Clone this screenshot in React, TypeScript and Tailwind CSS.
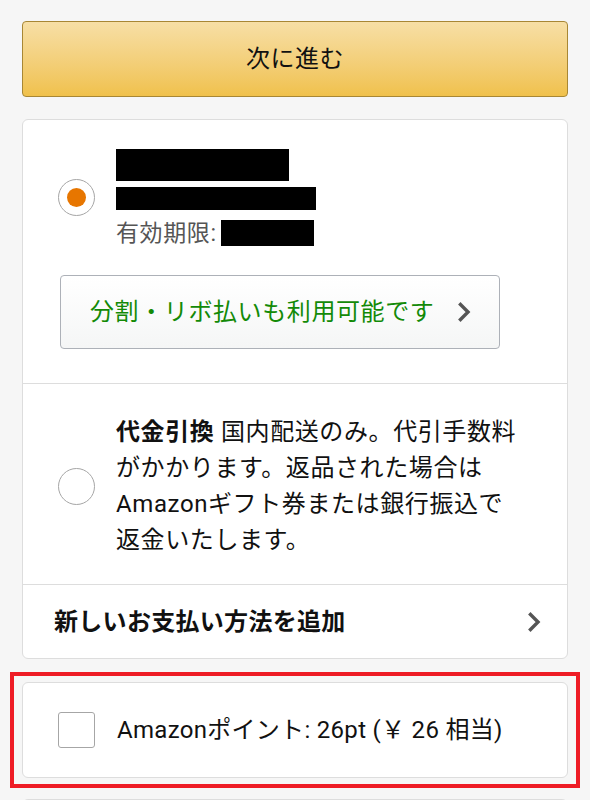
import React from 'react'

const font = { fontFamily: 'Roboto, "Noto Sans CJK JP", sans-serif' }

function Chevron({ className }: { className?: string }) {
  return (
    <svg viewBox="0 0 13 20" className={className} fill="none">
      <path d="M2.5 2.5 L10 10 L2.5 17.5" stroke="#555" strokeWidth="3.4" strokeLinecap="square" />
    </svg>
  )
}

function Radio({ checked }: { checked?: boolean }) {
  return (
    <div className="w-[37px] h-[37px] shrink-0 rounded-full border-[1.5px] border-[#a6a6a6] bg-white flex items-center justify-center">
      {checked && <div className="w-[19px] h-[19px] rounded-full bg-[#e77600]" />}
    </div>
  )
}

export default function App() {
  return (
    <div className="h-[800px] overflow-hidden bg-[#f6f6f6] px-[22px] pt-[21px] text-[#111]" style={font}>
      {/* 次に進む */}
      <button className="w-full h-[76px] rounded-[4px] border border-[#a88734] bg-gradient-to-b from-[#f7dfa5] to-[#f0c14b] text-[24px] tracking-[0.5px] text-[#111]">
        次に進む
      </button>

      {/* Payment methods */}
      <div className="mt-[22px] bg-white border border-[#dddddd] rounded-[6px]">
        <div className="pt-[29px] pb-[34px] border-b border-[#dddddd]">
          <div className="flex items-center pl-[35px] gap-[21px]">
            <Radio checked />
            <div className="flex flex-col">
              <div className="w-[173px] h-[32px] bg-black" />
              <div className="w-[200px] h-[23px] bg-black mt-[6px]" />
              <div className="flex items-center mt-[10px] h-[26px]">
                <span className="text-[23px] tracking-[0.6px] text-[#555] leading-none">有効期限:</span>
                <div className="w-[93px] h-[26px] bg-black ml-[4px]" />
              </div>
            </div>
          </div>
          <div className="ml-[37px] mt-[29px] w-[440px] h-[74px] rounded-[4px] border border-[#adb1b8] bg-gradient-to-b from-[#ffffff] to-[#f5f6f6] flex items-center pl-[29px] pr-[28px] justify-between">
            <span className="text-[24px] tracking-[0.6px] text-[#138a07] whitespace-nowrap">分割・リボ払いも利用可能です</span>
            <Chevron className="w-[13px] h-[20px]" />
          </div>
        </div>

        <div className="flex items-center pl-[35px] gap-[21px] pt-[30px] pb-[26px] border-b border-[#dddddd]">
          <Radio />
          <div className="text-[24px] leading-[36px] tracking-[0.6px] whitespace-nowrap">
            <span className="font-bold">代金引換</span> 国内配送のみ。代引手数料
            <br />
            がかかります。返品された場合は
            <br />
            Amazonギフト券または銀行振込で
            <br />
            返金いたします。
          </div>
        </div>

        <div className="h-[73px] flex items-center justify-between pl-[31px] pr-[26px]">
          <span className="text-[24px] tracking-[0.3px] font-bold">新しいお支払い方法を追加</span>
          <Chevron className="w-[13px] h-[20px]" />
        </div>
      </div>

      {/* Amazon points */}
      <div className="mt-[13px] -mx-[12px] border-[4px] border-[#ee1c25] px-[8px] py-[6px]">
        <div className="h-[96px] bg-white border border-[#dddddd] rounded-[6px] flex items-center pl-[35px] gap-[22px]">
          <div className="w-[37px] h-[36px] shrink-0 rounded-[3px] border-[1.5px] border-[#a6a6a6] bg-white" />
          <span className="text-[24px] tracking-[0.3px] whitespace-nowrap">Amazonポイント: 26pt (￥ 26 相当)</span>
        </div>
      </div>

      <div className="mt-[11px] h-[40px] bg-white border border-[#dddddd] rounded-[6px]" />
    </div>
  )
}
